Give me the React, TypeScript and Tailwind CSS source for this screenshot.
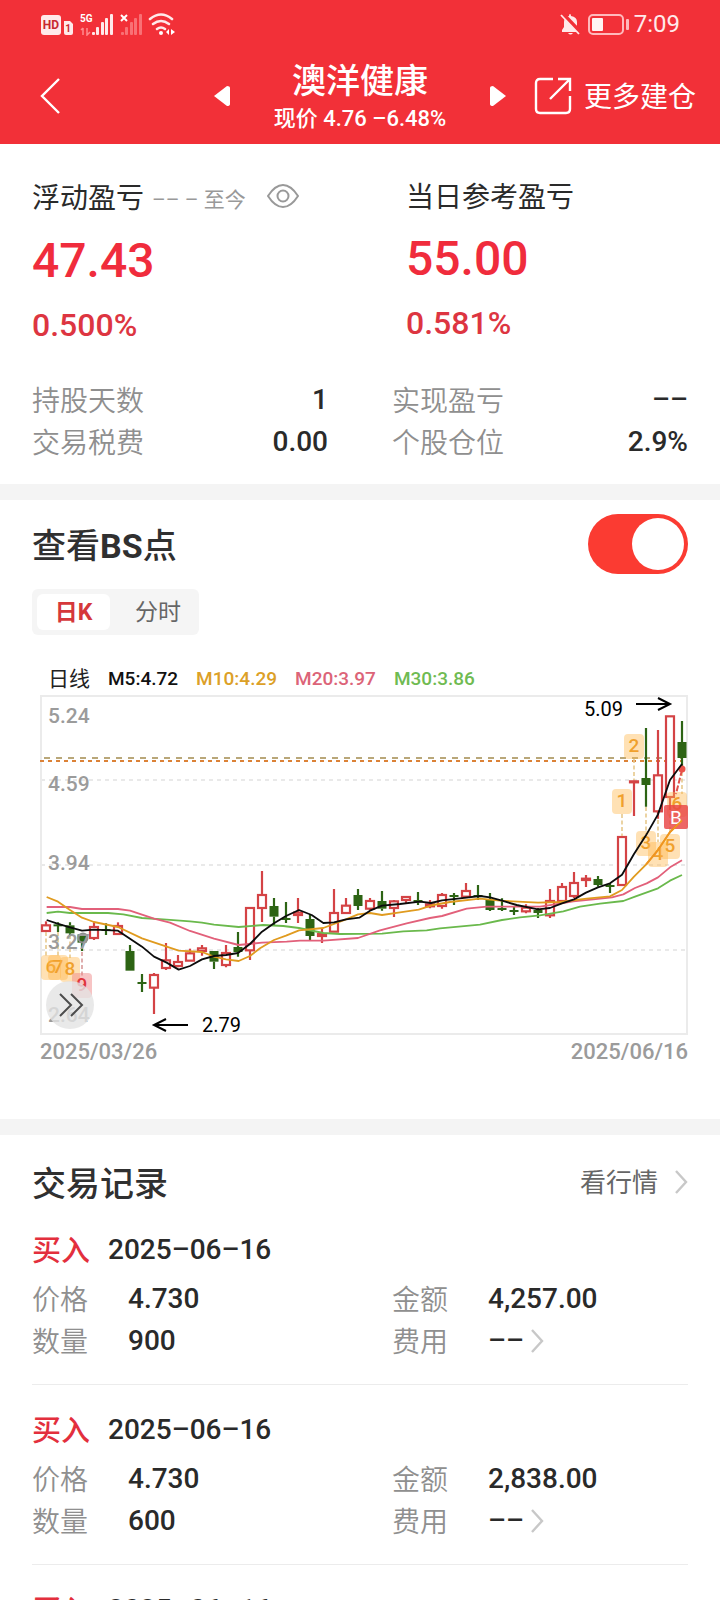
import { useState } from "react";
import type { ReactNode } from "react";

/* ---------- chart data: plot units are thirds of a pixel, 36 units per trading day ---------- */

type Candle = [high: number, top: number, bottom: number, low: number, up: 0 | 1];

const candles: Candle[] = [
  [694, 706, 723, 723, 1], [697, 703, 708, 726, 0], [697, 706, 730, 735, 0], [732, 733, 758, 783, 0],
  [697, 711, 744, 750, 1], [700, 717, 722, 735, 0], [697, 708, 732, 732, 1], [765, 783, 842, 842, 0],
  [852, 876, 881, 906, 0], [849, 855, 893, 972, 1], [759, 811, 834, 840, 1], [795, 816, 828, 832, 1],
  [776, 790, 812, 812, 1], [765, 775, 783, 797, 1], [783, 783, 815, 837, 0], [765, 789, 825, 832, 1],
  [726, 771, 786, 800, 0], [654, 654, 781, 810, 1], [543, 615, 654, 696, 1], [624, 648, 680, 705, 0],
  [636, 684, 688, 699, 0], [624, 668, 675, 699, 1], [675, 687, 738, 750, 0], [717, 732, 738, 759, 1],
  [597, 669, 725, 726, 1], [624, 647, 669, 669, 1], [597, 615, 648, 660, 0], [624, 633, 656, 660, 1],
  [603, 633, 656, 662, 0], [630, 634, 654, 681, 1], [620, 621, 630, 640, 1], [606, 630, 637, 645, 0],
  [630, 643, 649, 655, 1], [609, 615, 648, 656, 1], [609, 615, 621, 645, 0], [579, 603, 620, 622, 1],
  [585, 615, 621, 630, 0], [609, 630, 660, 663, 0], [625, 654, 660, 663, 0], [648, 660, 665, 675, 0],
  [643, 653, 664, 670, 1], [654, 660, 669, 684, 0], [597, 633, 676, 684, 1], [579, 591, 633, 633, 1],
  [546, 579, 618, 624, 1], [555, 566, 570, 591, 1], [558, 567, 585, 590, 0], [580, 585, 590, 609, 0],
  [441, 441, 585, 585, 1], [272, 274, 277, 378, 1], [114, 264, 285, 350, 0], [120, 256, 364, 386, 1],
  [79, 79, 321, 360, 1], [93, 156, 204, 234, 0],
];

const averages = [
  {
    stroke: "#6ab94c",
    points:
      "80,669 114,665 150,669 264,669 310,673 366,684 440,689 510,694 546,698 582,704 656,711 730,705 790,708 837,714 910,729 960,732 1086,731 1150,724 1220,721 1260,715 1380,704 1446,690 1500,682 1560,676 1630,664 1680,650 1740,641 1810,633 1845,620 1914,595 1950,572 1986,555",
  },
  {
    stroke: "#e2607a",
    points:
      "80,651 150,651 186,657 294,657 330,662 402,686 450,698 510,723 582,746 656,765 726,758 800,755 840,752 910,752 1014,744 1080,721 1160,700 1230,684 1266,678 1340,656 1400,650 1560,650 1600,644 1660,634 1720,628 1776,622 1810,613 1845,594 1880,580 1914,562 1950,532 1986,511",
  },
  {
    stroke: "#e09b1f",
    points:
      "80,621 114,635 150,660 186,683 222,696 294,711 366,745 440,770 476,782 546,786 582,800 618,808 656,813 690,798 720,775 762,750 798,737 837,721 910,714 978,688 1014,673 1050,669 1086,675 1140,667 1196,659 1240,645 1290,636 1380,626 1440,632 1554,638 1620,636 1700,626 1770,619 1806,600 1842,560 1878,524 1914,480 1950,426 1986,391",
  },
  {
    stroke: "#0c0c0c",
    points:
      "80,690 110,700 150,712 186,722 222,719 294,722 366,770 402,800 440,818 476,839 510,828 546,808 582,798 618,795 654,789 690,762 726,725 762,700 798,678 837,660 875,675 910,699 942,697 978,688 1018,683 1050,662 1086,647 1140,642 1200,635 1233,639 1266,631 1320,625 1380,618 1410,622 1446,632 1490,645 1554,658 1590,654 1626,640 1662,628 1698,608 1734,592 1770,580 1806,554 1842,492 1878,436 1914,373 1950,270 1986,222",
  },
];

/* x, y: centre of the badge; leader: x of the dashed line that runs from one y to another */
const badges = [
  { label: "6", x: 11, y: 277, leader: 6, from: 242, to: 268, red: false },
  { label: "7", x: 18, y: 277, leader: 18, from: 242, to: 268, red: false },
  { label: "8", x: 30, y: 279, leader: 30, from: 245, to: 268, red: false },
  { label: "9", x: 42, y: 295, leader: 42, from: 262, to: 286, red: true },
  { label: "1", x: 582, y: 111, leader: 582, from: 124, to: 146, red: false },
  { label: "2", x: 594, y: 56, leader: 594, from: 69, to: 90, red: false },
  { label: "3", x: 606, y: 153, leader: 606, from: 117, to: 144, red: false },
  { label: "4", x: 618, y: 164, leader: 618, from: 130, to: 152, red: false },
  { label: "5", x: 630, y: 156, leader: 630, from: 124, to: 144, red: false },
  { label: "6", x: 637, y: 114, leader: 642, from: 82, to: 104, red: false },
];

function KLineChart() {
  return (
    <svg viewBox="0 0 648 346" className="block h-auto w-full" role="img" aria-label="日K线图">
      {[90, 175, 260].map((y) => (
        <path key={y} d={`M1 ${y}H646`} stroke="#e9e9e9" strokeWidth="2" strokeDasharray="4 4" />
      ))}
      <rect x="1" y="6" width="646" height="338" fill="none" stroke="#ebebeb" strokeWidth="2" />

      <path d="M4 68H642" stroke="#b9a779" strokeWidth="2" strokeDasharray="6 6" />
      <path d="M0 71H642" stroke="#dc8237" strokeWidth="2" strokeDasharray="4 4" />

      {candles.map(([high, top, bottom, low, up], i) => {
        const x = 6 + 12 * i;
        const color = up ? "#d44345" : "#2d6414";
        return (
          <g key={i}>
            <path
              d={`M${x} ${high / 3}V${top / 3}M${x} ${bottom / 3}V${low / 3}`}
              stroke={color}
              strokeWidth="2.2"
              fill="none"
            />
            {up ? (
              <rect x={x - 4} y={top / 3} width="8" height={(bottom - top) / 3} fill="#fff" stroke={color} strokeWidth="2.2" />
            ) : (
              <rect x={x - 4.5} y={top / 3} width="9" height={Math.max((bottom - top) / 3, 2)} fill={color} />
            )}
          </g>
        );
      })}

      <g transform="translate(-20 0) scale(0.33333)">
        {averages.slice(0, 3).map((a) => (
          <polyline key={a.stroke} points={a.points} fill="none" stroke={a.stroke} strokeWidth="5.5" strokeLinejoin="round" />
        ))}
      </g>

      {badges.map((b, i) => (
        <g key={i}>
          <path
            d={`M${b.leader} ${b.from}V${b.to}`}
            stroke={b.red ? "#d79a9a" : "#e6c98c"}
            strokeWidth="1.6"
            strokeDasharray="4 2.5"
          />
          <rect
            x={b.x - 10}
            y={b.y - 12}
            width="20"
            height="25"
            rx="4"
            fill={b.red ? "#f08a8a" : "#ffb84d"}
            fillOpacity={b.red ? 0.5 : 0.42}
          />
          <text
            x={b.x}
            y={b.y + 6}
            textAnchor="middle"
            fontSize="19"
            fill={b.red ? "#e0353b" : "#f0a02c"}
            className="font-[Roboto,'Liberation_Sans',sans-serif] font-medium"
          >
            {b.label}
          </text>
        </g>
      ))}

      <path d="M642 80L636 104" stroke="#e0504a" strokeWidth="2" strokeDasharray="6 2" />
      <circle cx="642" cy="79" r="3.5" fill="#ea5148" />
      <rect x="624" y="115" width="24" height="24" rx="2" fill="#e94444" fillOpacity="0.82" />
      <text x="636" y="134" textAnchor="middle" fontSize="19" fill="#fff" className="font-[Roboto,'Liberation_Sans',sans-serif]">
        B
      </text>

      <g transform="translate(-20 0) scale(0.33333)">
        <polyline points="1878,524 1914,480 1950,426 1986,391" fill="none" stroke="#ef9420" strokeWidth="5.5" />
        <polyline points={averages[3].points} fill="none" stroke={averages[3].stroke} strokeWidth="5.5" strokeLinejoin="round" />
      </g>
      <circle cx="43" cy="248" r="4.5" fill="#2d6414" fillOpacity="0.5" stroke="#8c8c8c" strokeWidth="2" />

      <g fill="#9b9b9b" fontSize="21" className="font-[Roboto,'Liberation_Sans',sans-serif] font-medium">
        <text x="8" y="33">5.24</text>
        <text x="8" y="101">4.59</text>
        <text x="8" y="180">3.94</text>
        <text x="8" y="259">3.27</text>
        <text x="8" y="332">2.64</text>
      </g>

      <g fill="none" stroke="#000" strokeWidth="2">
        <path d="M596 14H630M618 8L630 14L618 20" />
        <path d="M148 335H114M126 329L114 335L126 341" />
      </g>
      <g fill="#000" fontSize="20" className="font-[Roboto,'Liberation_Sans',sans-serif]">
        <text x="544" y="26">5.09</text>
        <text x="162" y="342">2.79</text>
      </g>

      <circle cx="30" cy="315" r="24" fill="#e4e4e4" fillOpacity="0.8" />
      <path d="M20 304L31 315L20 326M31 304L42 315L31 326" fill="none" stroke="#4d4d4d" strokeWidth="2" />
    </svg>
  );
}

/* ---------- icons ---------- */

function StatusIcons() {
  return (
    <svg viewBox="0 0 136 24" className="h-6 w-[136px]" aria-hidden="true">
      <rect x="1" y="3" width="20" height="20" rx="3" fill="#ffe9ea" />
      <text x="11" y="17" textAnchor="middle" fontSize="12" fill="#c8282f" className="font-[Roboto,sans-serif] font-bold">HD</text>
      <path d="M24 9h6l3 3v9q0 2-2 2h-5q-2 0-2-2z" fill="#ffe9ea" />
      <text x="28" y="20" textAnchor="middle" fontSize="10" fill="#c8282f" className="font-[Roboto,sans-serif] font-bold">1</text>
      <text x="40" y="10" fontSize="10" fill="#fff" className="font-[Roboto,sans-serif] font-bold">5G</text>
      <path d="M43 16v7M43 16l-2 2M47 16v7l3-3" stroke="#ff8a8e" strokeWidth="1.5" fill="none" />
      <g fill="#ffe9ea">
        <rect x="52" y="20" width="3" height="3" rx="1" />
        <rect x="56" y="15" width="3" height="8" rx="1" />
        <rect x="61" y="10" width="3" height="13" rx="1" />
        <rect x="65" y="6" width="3" height="17" rx="1" />
        <rect x="70" y="2" width="3" height="21" rx="1" />
      </g>
      <path d="M81 3l6 6M87 3l-6 6" stroke="#fff" strokeWidth="2" />
      <g fill="#f97075">
        <rect x="81" y="20" width="3" height="3" rx="1" />
        <rect x="85" y="15" width="3" height="8" rx="1" />
        <rect x="90" y="10" width="3" height="13" rx="1" />
        <rect x="94" y="6" width="3" height="17" rx="1" />
        <rect x="99" y="2" width="3" height="21" rx="1" />
      </g>
      <g fill="none" stroke="#ffe9ea" strokeWidth="2.6" strokeLinecap="round">
        <path d="M110 7q11-9 22 0" />
        <path d="M113 12q8-6 16 0" />
        <path d="M117 17q4-3 8 0" />
      </g>
      <circle cx="121" cy="21" r="2" fill="#fff" />
      <path d="M129 17v6l-3-3zM131 17v6l4-3z" fill="#fff" />
    </svg>
  );
}

function BatteryIcons() {
  return (
    <svg viewBox="0 0 70 24" className="h-6 w-[70px]" aria-hidden="true">
      <path d="M2 20V18l2-3V10q0-5 5-6 0-2 1-2t1 2q6 1 6 6v5l2 3v2z" fill="#ffe9ea" />
      <path d="M8 21h5q-2.500 3-5 0z" fill="#ffe9ea" />
      <path d="M2 1L21 21" stroke="#f23038" strokeWidth="4" />
      <path d="M1 3L19 22" stroke="#ffe9ea" strokeWidth="1.8" />
      <rect x="29" y="3" width="34" height="19" rx="4" fill="none" stroke="#ffb9bc" strokeWidth="2" />
      <rect x="32" y="6" width="11" height="13" rx="1" fill="#fff3f3" />
      <rect x="66" y="7" width="3" height="11" rx="1" fill="#ffb9bc" />
    </svg>
  );
}

function Chevron({ className }: { className: string }) {
  return (
    <svg viewBox="0 0 14 24" className={className} fill="none" stroke="#c8c8c8" strokeWidth="2.4" aria-hidden="true">
      <path d="M2 1L12 12L2 23" />
    </svg>
  );
}

/* ---------- pieces ---------- */

function StatRow({ label, value }: { label: string; value: string }) {
  return (
    <div className="flex h-[42px] items-center justify-between text-[28px]">
      <dt className="pt-1 font-[350] text-[#8f8f8f]">{label}</dt>
      <dd className="font-medium text-[#2a2a2a]">{value}</dd>
    </div>
  );
}

function DetailRow({ label, children }: { label: string; children: ReactNode }) {
  return (
    <div className="flex h-[42px] items-center text-[28px]">
      <dt className="w-24 pt-1 font-[350] text-[#8f8f8f]">{label}</dt>
      <dd className="font-medium text-[#2a2a2a]">{children}</dd>
    </div>
  );
}

type Trade = { id: number; date: string; price: string; amount: string; count: string };

const trades: Trade[] = [
  { id: 1, date: "2025–06–16", price: "4.730", amount: "4,257.00", count: "900" },
  { id: 2, date: "2025–06–16", price: "4.730", amount: "2,838.00", count: "600" },
];

function TradeHeader({ date }: { date: string }) {
  return (
    <h3 className="flex h-10 items-center gap-[18px]">
      <span className="pt-1 text-[29px] font-medium text-[#e32f3d]">买入</span>
      <span className="text-[28px] font-medium text-[#2a2a2a]">{date}</span>
    </h3>
  );
}

function TradeRecord({ trade }: { trade: Trade }) {
  return (
    <li className="border-b border-[#ececec] pt-[25px] pb-[22px]">
      <TradeHeader date={trade.date} />
      <dl className="mt-2 grid grid-cols-2 gap-x-16">
        <DetailRow label="价格">{trade.price}</DetailRow>
        <DetailRow label="金额">{trade.amount}</DetailRow>
        <DetailRow label="数量">{trade.count}</DetailRow>
        <DetailRow label="费用">
          <button type="button" aria-label="费用明细" className="flex items-center gap-1.5">
            –– <Chevron className="h-6 w-[14px]" />
          </button>
        </DetailRow>
      </dl>
    </li>
  );
}

export default function App() {
  const [showPoints, setShowPoints] = useState(true);
  const [period, setPeriod] = useState<"day" | "time">("day");

  return (
    <div className="h-screen overflow-hidden bg-white font-[Roboto,'Noto_Sans_CJK_SC',sans-serif] text-[#2a2a2a]">
      <header className="bg-[#f23038] text-white">
        <div className="flex h-12 items-center justify-between pr-10 pl-10">
          <StatusIcons />
          <div className="flex items-center gap-1">
            <BatteryIcons />
            <span className="text-2xl text-[#ffe9ea]">7:09</span>
          </div>
        </div>
        <div className="grid h-24 grid-cols-[1fr_294px_1fr] items-center">
          <button type="button" aria-label="返回" className="w-fit pl-[39px]">
            <svg viewBox="0 0 22 36" className="h-9 w-[22px]" fill="none" stroke="#fff" strokeWidth="2.4">
              <path d="M20 1L3 18L20 35" />
            </svg>
          </button>
          <div className="flex items-center justify-between">
            <button type="button" aria-label="上一只">
              <svg viewBox="0 0 18 20" className="h-5 w-[18px]" fill="#fff">
                <path d="M1 10L14 0Q17 0 17 2V18Q17 20 14 20Z" />
              </svg>
            </button>
            <div className="pt-1 text-center">
              <h1 className="text-[34px] leading-10 font-medium">澳洋健康</h1>
              <p className="pt-[2px] text-[22px] leading-8 font-medium">现价 4.76 –6.48%</p>
            </div>
            <button type="button" aria-label="下一只">
              <svg viewBox="0 0 18 20" className="h-5 w-[18px]" fill="#fff">
                <path d="M17 10L4 0Q1 0 1 2V18Q1 20 4 20Z" />
              </svg>
            </button>
          </div>
          <a href="#more" className="flex items-center justify-end gap-3 pr-6 text-[28px]">
            <svg viewBox="0 0 38 38" className="h-[38px] w-[38px]" fill="none" stroke="#fff" strokeWidth="2.4">
              <path d="M19 2H6Q2 2 2 6V32Q2 36 6 36H32Q36 36 36 32V19M24 2H36V14M35 3L16 22" />
            </svg>
            <span className="pt-1">更多建仓</span>
          </a>
        </div>
      </header>

      <section className="border-b-16 border-[#f4f4f4] px-8 pt-[33px] pb-[21px]">
        <div className="grid grid-cols-2 gap-x-16">
          <div>
            <div className="flex h-10 items-center">
              <h2 className="pt-1 text-[28px]">浮动盈亏</h2>
              <p className="ml-2 pt-2 text-[21px] text-[#999]">–– – 至今</p>
              <button type="button" aria-label="显示或隐藏" className="ml-5">
                <svg viewBox="0 0 34 26" className="h-[26px] w-[34px]" fill="none" stroke="#999" strokeWidth="2">
                  <path d="M2 12Q9 1 17 1T32 12Q25 23 17 23T2 12Z" />
                  <circle cx="17" cy="12" r="5.5" />
                </svg>
              </button>
            </div>
            <p className="mt-3 text-5xl leading-[64px] font-medium text-[#f02c3c]">47.43</p>
            <p className="mt-3 text-[32px] leading-10 font-medium text-[#dd3541]">0.500%</p>
          </div>
          <div className="pl-[14px]">
            <h2 className="flex h-10 items-center pt-[2px] text-[28px]">当日参考盈亏</h2>
            <p className="mt-[10px] text-5xl leading-[64px] font-medium text-[#f02c3c]">55.00</p>
            <p className="mt-3 text-[32px] leading-10 font-medium text-[#dd3541]">0.581%</p>
          </div>
        </div>
        <dl className="mt-[34px] grid grid-cols-2 gap-x-16">
          <StatRow label="持股天数" value="1" />
          <StatRow label="实现盈亏" value="––" />
          <StatRow label="交易税费" value="0.00" />
          <StatRow label="个股仓位" value="2.9%" />
        </dl>
      </section>

      <section className="border-b-16 border-[#f4f4f4] px-8 pt-[14px] pb-[53px]">
        <label className="flex h-[60px] items-center justify-between">
          <span className="pt-1 text-[34px] font-medium text-[#303030]">
            查看<span className="font-bold">BS</span>点
          </span>
          <span className="relative">
            <input
              type="checkbox"
              role="switch"
              checked={showPoints}
              onChange={(e) => setShowPoints(e.target.checked)}
              className="peer block h-[60px] w-[100px] appearance-none rounded-full bg-[#ddd] checked:bg-[#fb3b32]"
            />
            <span className="pointer-events-none absolute top-1 left-1 size-[52px] rounded-full bg-white peer-checked:left-11" />
          </span>
        </label>

        <div role="tablist" className="mt-[15px] flex h-[46px] w-fit items-center rounded-md bg-[#f5f5f5] p-[5px] text-[23px] text-[#666]">
          <button
            type="button"
            role="tab"
            aria-selected={period === "day"}
            onClick={() => setPeriod("day")}
            className="h-9 w-[73px] rounded-md pt-[2px] leading-[34px] aria-selected:bg-white aria-selected:font-bold aria-selected:text-[#d5383b]"
          >
            日K
          </button>
          <button
            type="button"
            role="tab"
            aria-selected={period === "time"}
            onClick={() => setPeriod("time")}
            className="ml-3 h-9 w-[72px] rounded-md pt-[2px] leading-[34px] aria-selected:bg-white aria-selected:font-bold aria-selected:text-[#d5383b]"
          >
            分时
          </button>
        </div>

        <div className="mt-[33px] pl-2">
          <ul className="flex h-[22px] items-center gap-[18px] pl-2 text-[19px] leading-[22px] font-medium">
            <li className="text-[21px] font-normal text-[#222]">日线</li>
            <li className="text-[#111]">M5:4.72</li>
            <li className="text-[#dca027]">M10:4.29</li>
            <li className="text-[#dc6478]">M20:3.97</li>
            <li className="text-[#6fbb52]">M30:3.86</li>
          </ul>
          <KLineChart />
          <div className="mt-[2px] flex justify-between text-[22px] leading-7 font-medium text-[#9b9b9b]">
            <time>2025/03/26</time>
            <time>2025/06/16</time>
          </div>
        </div>
      </section>

      <section className="px-8 pt-6">
        <div className="flex h-[46px] items-center justify-between">
          <h2 className="pt-1 text-[34px] font-medium text-[#303030]">交易记录</h2>
          <a href="#quotes" className="flex items-center gap-4 text-[26px] text-[#666]">
            <span className="pt-[2px]">看行情</span>
            <Chevron className="h-6 w-[14px]" />
          </a>
        </div>
        <ul>
          {trades.map((trade) => (
            <TradeRecord key={trade.id} trade={trade} />
          ))}
          <li className="pt-[25px]">
            <TradeHeader date="2025–06–16" />
          </li>
        </ul>
      </section>
    </div>
  );
}
